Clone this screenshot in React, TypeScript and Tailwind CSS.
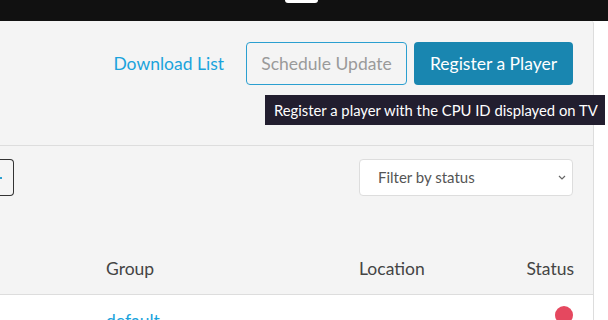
import React from 'react';

const App: React.FC = () => {
  return (
    <div className="w-[608px] h-[320px] overflow-hidden bg-white font-['Lato',sans-serif]">
      {/* top bar */}
      <div className="h-[21px] bg-[#111111] flex pl-[285px]">
        <div className="w-[33px] h-[3px] bg-white rounded-b-[3px]" />
      </div>

      <div className="flex">
        <div className="w-[594px] h-[299px] bg-[#f4f4f4] border-r border-[#dddddd] rounded-tr-[3px] relative">
          {/* actions */}
          <div className="h-[124px] flex justify-end items-start pt-[21px] pr-[20px] gap-[7px]">
            <a className="h-[43px] flex items-center pt-[2px] pr-[15px] text-[17.5px] text-[#1aa3dc]">Download List</a>
            <button className="h-[43px] w-[161px] pt-[2px] rounded-[4px] border border-[#2b9fd0] text-[17.5px] text-[#9a9a9a]">
              Schedule Update
            </button>
            <button className="h-[43px] w-[159px] pt-[2px] rounded-[4px] bg-[#1986b0] text-[17.5px] text-white">
              Register a Player
            </button>
          </div>

          {/* tooltip */}
          <div className="absolute left-[265px] top-[74px] w-[340px] h-[30px] bg-[#221e2f] text-white text-[14.8px] flex items-center pt-[1px] pl-[9px] z-10">
            Register a player with the CPU ID displayed on TV
          </div>

          <div className="h-px bg-[#dddddd]" />

          {/* filters */}
          <div className="flex justify-between items-start pt-[13px] pr-[20px]">
            <div className="w-[14px] h-[37px] border border-l-0 border-[#333333] rounded-r-[4px] relative">
              <div className="absolute left-0 top-[17px] w-[2px] h-[2px] bg-[#2b9fd0]" />
            </div>
            <div className="w-[214px] h-[37px] bg-white border border-[#dddddd] rounded-[4px] flex items-center justify-between pl-[18px] pr-[6px] text-[15px] text-[#555555]">
              <span>Filter by status</span>
              <svg width="8" height="5" viewBox="0 0 8 5" fill="none" stroke="#666" strokeWidth="1.2">
                <path d="M1 1l3 3l3-3" />
              </svg>
            </div>
          </div>

          {/* table header */}
          <div className="mt-[49px] h-[50px] flex items-center text-[17.5px] text-[#444444] border-b border-[#dddddd] pr-[19px]">
            <div className="pl-[106px] w-[359px]">Group</div>
            <div className="flex-1">Location</div>
            <div>Status</div>
          </div>

          {/* first row */}
          <div className="bg-white h-[40px] flex pr-[20px] pt-[10px]">
            <div className="pl-[106px] w-[359px] text-[17.5px] text-[#1aa3dc] leading-none pt-[7px]">default</div>
            <div className="flex-1" />
            <div className="w-[18px] h-[18px] mt-[1px] rounded-full bg-[#e5485f]" />
          </div>
        </div>
        <div className="flex-1 bg-white" />
      </div>
    </div>
  );
};

export default App;
